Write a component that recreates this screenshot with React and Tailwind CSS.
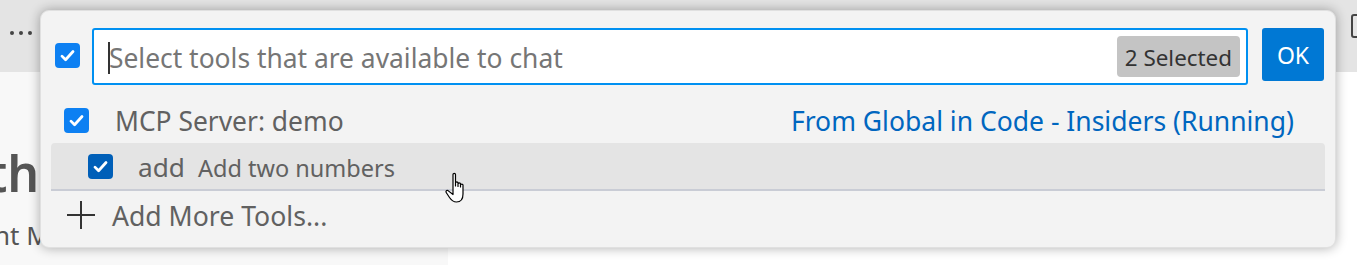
import React from "react";

const font = { fontFamily: '"Noto Sans", "Open Sans", sans-serif' };

function Check({ color = "bg-[#0d80f2]" }) {
  return (
    <div className={`w-[25px] h-[25px] rounded-[4px] ${color} flex items-center justify-center shrink-0`}>
      <svg width="17" height="17" viewBox="0 0 16 16">
        <path d="M2.8 8.6 L6.2 12 L13.2 4.2" fill="none" stroke="white" strokeWidth="2.6" strokeLinecap="round" strokeLinejoin="round" />
      </svg>
    </div>
  );
}

function Hand() {
  return (
    <svg width="28" height="36" viewBox="0 0 28 36" className="absolute left-[444px] top-[171px]">
      <path
        d="M9 3.5 C9 2 11.5 2 11.5 3.5 L11.5 15 L11.5 12 C11.5 10.6 14 10.6 14 12 L14 15.5 L14 13 C14 11.6 16.5 11.6 16.5 13 L16.5 16 L16.5 14 C16.5 12.8 19 12.8 19 14 L19 23 C19 28 16.5 31 12.5 31 C9 31 7.5 29.5 5.5 26.5 L2.2 21.5 C1.4 20.3 2.6 18.8 4 19.6 L9 23.5 Z"
        fill="white"
        stroke="black"
        strokeWidth="1.2"
        strokeLinejoin="round"
      />
    </svg>
  );
}

export default function App() {
  return (
    <div className="relative w-[1357px] h-[265px] overflow-hidden bg-white" style={font}>
      {/* background workbench */}
      <div className="h-[72px] bg-[#e4e4e4] flex items-center justify-between">
        <div className="flex gap-[5px] ml-[10px] mt-[-6px]">
          <span className="w-[4px] h-[4px] rounded-full bg-[#444]" />
          <span className="w-[4px] h-[4px] rounded-full bg-[#444]" />
          <span className="w-[4px] h-[4px] rounded-full bg-[#444]" />
        </div>
        <div className="w-[14px] h-[24px] border-2 border-[#444] rounded-[3px] mr-[-8px] mt-[-20px]" />
      </div>
      <div className="flex h-[193px]">
        <div className="w-[448px] bg-[#f8f8f8] pt-[76px] overflow-hidden">
          <div className="text-[50px] leading-[50px] font-semibold text-[#555] ml-[-13px] whitespace-nowrap">th</div>
          <div className="text-[26px] leading-[26px] text-[#555] mt-[24px] ml-[-6px] whitespace-nowrap">nt M</div>
        </div>
        <div className="flex-1 bg-white" />
      </div>

      {/* quick pick overlay */}
      <div className="absolute left-[40px] top-[10px] w-[1296px] h-[238px] rounded-[9px] bg-[#f3f3f3] shadow-[0_0_12px_rgba(0,0,0,0.32)] border border-[#e0e0e0]">
        <div className="flex items-start pt-[17px] pl-[14px] pr-[11px]">
          <div className="mt-[15px]">
            <Check />
          </div>
          <div className="ml-[12px] w-[1156px] h-[57px] bg-white border-2 border-[#0090f1] rounded-[3px] flex items-center pl-[14px] pr-[6px]">
            <span className="w-[2px] h-[32px] bg-[#333] mr-[-1px] mt-[3px]" />
            <span className="text-[26.4px] text-[#767676] flex-1 whitespace-nowrap mt-[5px]">Select tools that are available to chat</span>
            <span className="h-[41px] px-[8px] rounded-[4px] bg-[#c4c4c4] text-[22.4px] text-[#333] flex items-center whitespace-nowrap pt-[3px]">2 Selected</span>
          </div>
          <div className="ml-[14px] w-[62px] h-[53px] rounded-[3px] bg-[#0078d4] text-white text-[23px] flex items-center justify-center pt-[2px]">OK</div>
        </div>

        <div className="flex items-center h-[40px] mt-[15px] pl-[23px] pr-[41px]">
          <Check />
          <span className="ml-[26px] text-[26.4px] text-[#616161] flex-1 whitespace-nowrap mt-[3px]">MCP Server: demo</span>
          <span className="text-[26.5px] text-[#0066bf] whitespace-nowrap mt-[3px]">From Global in Code - Insiders (Running)</span>
        </div>

        <div className="mx-[10px] mt-[3px] h-[48px] bg-[#e4e4e4] rounded-t-[4px] border-b-2 border-[#c9ccd5] flex items-center pl-[37px]">
          <Check color="bg-[#005fb8]" />
          <span className="ml-[25px] text-[26.2px] text-[#616161] whitespace-nowrap mt-[3px]">add</span>
          <span className="ml-[13px] text-[23.5px] text-[#616161] mt-[6px] whitespace-nowrap">Add two numbers</span>
        </div>

        <div className="flex items-center h-[48px] pl-[25px]">
          <svg width="30" height="30" viewBox="0 0 30 30">
            <path d="M15 1 V29 M1 15 H29" stroke="#333" strokeWidth="2" />
          </svg>
          <span className="ml-[16px] text-[26.6px] text-[#616161] whitespace-nowrap mt-[3px]">Add More Tools...</span>
        </div>
      </div>
      <Hand />
    </div>
  );
}
